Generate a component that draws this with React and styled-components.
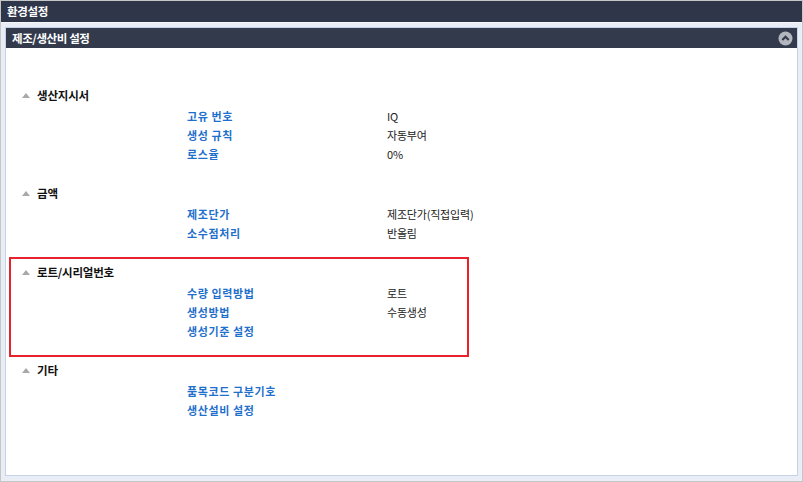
import React from "react";
import styled, { createGlobalStyle } from "styled-components";

const Global = createGlobalStyle`
  html, body { margin: 0; padding: 0; background: #fff; }
  body { font-family: "Noto Sans CJK KR", "Noto Sans", sans-serif; }
  * { box-sizing: border-box; }
`;

const Frame = styled.div`
  width: 803px;
  height: 482px;
  border: 1px solid #c6c6c6;
  background: #e9eef6;
  display: flex;
  flex-direction: column;
`;

const TopBar = styled.div`
  height: 22px;
  background: #30364a;
  border-bottom: 1px solid #f4f6fa;
  color: #fff;
  font-size: 11.5px;
  font-weight: 700;
  line-height: 21px;
  padding-left: 6px;
  letter-spacing: -0.3px;
`;

const Panel = styled.div`
  flex: 1;
  margin: 4px 4px 5px 4px;
  border: 1px solid #c5d2e8;
  background: #fff;
  display: flex;
  flex-direction: column;
`;

const PanelHeader = styled.div`
  height: 20px;
  background: #323a4c;
  color: #fff;
  font-size: 11.5px;
  font-weight: 700;
  padding-left: 6px;
  padding-right: 4px;
  display: flex;
  align-items: center;
  justify-content: space-between;
  letter-spacing: -0.4px;
`;

const Content = styled.div`
  padding: 37px 0 0 0;
  display: flex;
  flex-direction: column;
  gap: 20px;
`;

const Section = styled.div`
  position: relative;
  ${(p) =>
    p.$highlight &&
    `
    &::before {
      content: "";
      position: absolute;
      left: 3px;
      top: -5px;
      width: 456px;
      height: 96px;
      border: 2px solid #e8222c;
      pointer-events: none;
    }
  `}
`;

const Heading = styled.div`
  height: 20px;
  display: flex;
  align-items: center;
  padding-left: 16px;
  gap: 7px;
  font-size: 11.5px;
  font-weight: 700;
  color: #111;
  letter-spacing: -0.2px;
`;

const Tri = styled.span`
  width: 0;
  height: 0;
  border-left: 4px solid transparent;
  border-right: 4px solid transparent;
  border-bottom: 5px solid #a9a9a9;
`;

const Rows = styled.div`
  margin-top: 1px;
  padding-left: 181px;
  display: flex;
  flex-direction: column;
`;

const Row = styled.div`
  height: 19px;
  display: flex;
  align-items: center;
  font-size: 11px;
`;

const Label = styled.span`
  width: 200px;
  color: #1f6fcc;
  font-weight: 700;
  letter-spacing: 0.6px;
`;

const Value = styled.span`
  color: #222;
  letter-spacing: -0.2px;
`;

const CollapseIcon = () => (
  <svg width="15" height="15" viewBox="0 0 15 15">
    <circle cx="7.5" cy="7.5" r="7" fill="#b3b6bc" />
    <path d="M4.3 9 L7.5 5.8 L10.7 9" fill="none" stroke="#323a4c" strokeWidth="2.2" />
  </svg>
);

const sections = [
  {
    title: "생산지시서",
    rows: [
      ["고유 번호", "IQ"],
      ["생성 규칙", "자동부여"],
      ["로스율", "0%"],
    ],
  },
  {
    title: "금액",
    rows: [
      ["제조단가", "제조단가(직접입력)"],
      ["소수점처리", "반올림"],
    ],
  },
  {
    title: "로트/시리얼번호",
    highlight: true,
    rows: [
      ["수량 입력방법", "로트"],
      ["생성방법", "수동생성"],
      ["생성기준 설정", ""],
    ],
  },
  {
    title: "기타",
    rows: [
      ["품목코드 구분기호", ""],
      ["생산설비 설정", ""],
    ],
  },
];

export default function App() {
  return (
    <>
      <Global />
      <Frame>
        <TopBar>환경설정</TopBar>
        <Panel>
          <PanelHeader>
            <span>제조/생산비 설정</span>
            <CollapseIcon />
          </PanelHeader>
          <Content>
            {sections.map((s) => (
              <Section key={s.title} $highlight={s.highlight}>
                <Heading>
                  <Tri />
                  {s.title}
                </Heading>
                <Rows>
                  {s.rows.map(([l, v]) => (
                    <Row key={l}>
                      <Label>{l}</Label>
                      <Value>{v}</Value>
                    </Row>
                  ))}
                </Rows>
              </Section>
            ))}
          </Content>
        </Panel>
      </Frame>
    </>
  );
}
